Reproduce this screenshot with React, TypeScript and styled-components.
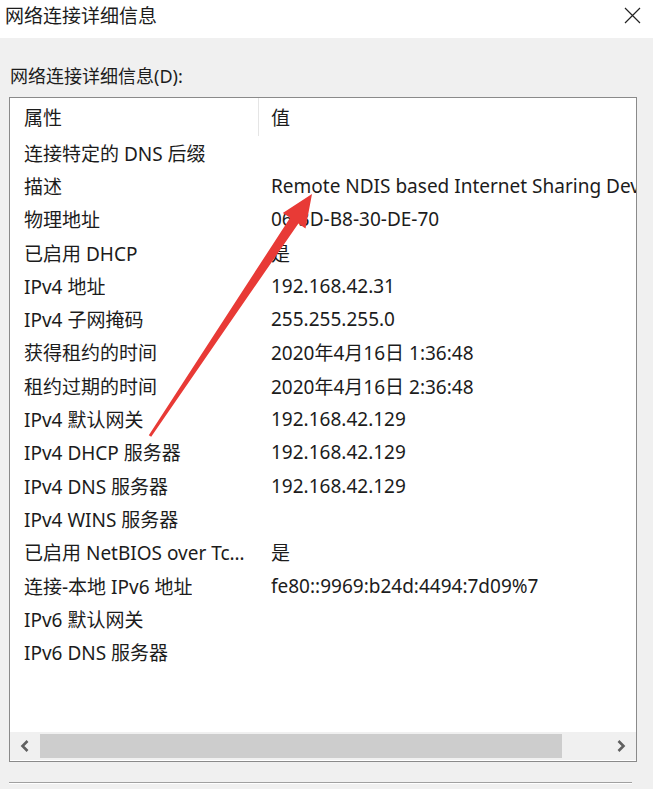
import React from "react";
import styled, { createGlobalStyle } from "styled-components";

const GlobalStyle = createGlobalStyle`
  html, body {
    margin: 0;
    padding: 0;
    background: #f0f0f0;
  }
  body {
    font-family: "Noto Sans", "Noto Sans CJK SC", sans-serif;
    color: #1c1c1c;
    -webkit-font-smoothing: antialiased;
  }
`;

const Window = styled.div`
  position: relative;
  width: 653px;
  height: 789px;
  overflow: hidden;
  background: #f0f0f0;
  display: flex;
  flex-direction: column;
`;

const TitleBar = styled.div`
  height: 38px;
  flex: none;
  background: #ffffff;
  display: flex;
  align-items: center;
  justify-content: space-between;
  padding: 0 12px 0 5px;
`;

const Title = styled.span`
  font-size: 19px;
  line-height: 24px;
  margin-top: -6px;
`;

const CloseButton = styled.div`
  width: 18px;
  height: 18px;
  display: flex;
  align-items: center;
  justify-content: center;
  margin-top: -8px;
`;

const Body = styled.div`
  flex: 1;
  display: flex;
  flex-direction: column;
  padding: 26px 16px 0 9px;
`;

const GroupLabel = styled.div`
  font-size: 18px;
  line-height: 24px;
  padding-left: 1px;
  margin-bottom: 9px;
`;

const ListBox = styled.div`
  width: 628px;
  height: 665px;
  box-sizing: border-box;
  border: 1px solid #8a8a8a;
  background: #ffffff;
  display: flex;
  flex-direction: column;
`;

const ListContent = styled.div`
  flex: 1;
  overflow: hidden;
`;

const Row = styled.div<{ $header?: boolean }>`
  display: grid;
  grid-template-columns: 249px 1fr;
  height: ${(p) => (p.$header ? "38px" : "33.3px")};
  align-items: stretch;
  font-size: 19px;
`;

const Cell = styled.div<{ $first?: boolean; $divider?: boolean }>`
  display: flex;
  align-items: center;
  padding-left: ${(p) => (p.$first ? "14px" : "12px")};
  padding-right: ${(p) => (p.$first ? "6px" : "0")};
  white-space: nowrap;
  overflow: hidden;
  min-width: 0;
  border-right: ${(p) => (p.$divider ? "1px solid #e5e5e5" : "none")};
`;

const CellText = styled.span<{ $ellipsis?: boolean }>`
  overflow: hidden;
  text-overflow: ${(p) => (p.$ellipsis ? "ellipsis" : "clip")};
  white-space: nowrap;
`;

const ScrollBar = styled.div`
  height: 28px;
  flex: none;
  background: #f0f0f0;
  display: flex;
  align-items: stretch;
  padding: 2px 0;
  box-sizing: border-box;
  margin-bottom: 1px;
`;

const ScrollArrow = styled.div`
  width: 30px;
  flex: none;
  display: flex;
  align-items: center;
  justify-content: center;
`;

const ScrollTrack = styled.div`
  flex: 1;
  display: flex;
`;

const ScrollThumb = styled.div<{ $width: number }>`
  width: ${(p) => p.$width}px;
  background: #cdcdcd;
`;

const Separator = styled.div`
  margin-top: 20px;
  width: 623px;
  height: 1px;
  background: #a0a0a0;
  border-bottom: 1px solid #ffffff;
`;

const Annotation = styled.svg`
  position: absolute;
  left: 0;
  top: 0;
  pointer-events: none;
`;

const rows: [string, string][] = [
  ["连接特定的 DNS 后缀", ""],
  ["描述", "Remote NDIS based Internet Sharing Device"],
  ["物理地址", "06-3D-B8-30-DE-70"],
  ["已启用 DHCP", "是"],
  ["IPv4 地址", "192.168.42.31"],
  ["IPv4 子网掩码", "255.255.255.0"],
  ["获得租约的时间", "2020年4月16日 1:36:48"],
  ["租约过期的时间", "2020年4月16日 2:36:48"],
  ["IPv4 默认网关", "192.168.42.129"],
  ["IPv4 DHCP 服务器", "192.168.42.129"],
  ["IPv4 DNS 服务器", "192.168.42.129"],
  ["IPv4 WINS 服务器", ""],
  ["已启用 NetBIOS over Tcpip", "是"],
  ["连接-本地 IPv6 地址", "fe80::9969:b24d:4494:7d09%7"],
  ["IPv6 默认网关", ""],
  ["IPv6 DNS 服务器", ""],
];

export default function App() {
  return (
    <>
      <GlobalStyle />
      <Window>
        <TitleBar>
          <Title>网络连接详细信息</Title>
          <CloseButton>
            <svg width="17" height="17" viewBox="0 0 17 17">
              <path d="M1 1 L16 16 M16 1 L1 16" stroke="#222" strokeWidth="1.2" />
            </svg>
          </CloseButton>
        </TitleBar>
        <Body>
          <GroupLabel>网络连接详细信息(D):</GroupLabel>
          <ListBox>
            <ListContent>
              <Row $header>
                <Cell $first $divider>
                  <CellText>属性</CellText>
                </Cell>
                <Cell>
                  <CellText>值</CellText>
                </Cell>
              </Row>
              {rows.map(([k, v]) => (
                <Row key={k}>
                  <Cell $first>
                    <CellText $ellipsis>{k}</CellText>
                  </Cell>
                  <Cell>
                    <CellText>{v}</CellText>
                  </Cell>
                </Row>
              ))}
            </ListContent>
            <ScrollBar>
              <ScrollArrow>
                <svg width="10" height="14" viewBox="0 0 10 14">
                  <path d="M7.5 2 L2.5 7 L7.5 12" fill="none" stroke="#606060" strokeWidth="2.6" />
                </svg>
              </ScrollArrow>
              <ScrollTrack>
                <ScrollThumb $width={522} />
              </ScrollTrack>
              <ScrollArrow>
                <svg width="10" height="14" viewBox="0 0 10 14">
                  <path d="M2.5 2 L7.5 7 L2.5 12" fill="none" stroke="#606060" strokeWidth="2.6" />
                </svg>
              </ScrollArrow>
            </ScrollBar>
          </ListBox>
          <Separator />
        </Body>
        <Annotation width="653" height="789" viewBox="0 0 653 789">
          <polygon
            points="312,194 305.5,228.5 298.4,223.4 151.2,436.8 148.8,435.2 290.1,217.8 282.8,213"
            fill="#e83a36"
          />
        </Annotation>
      </Window>
    </>
  );
}
